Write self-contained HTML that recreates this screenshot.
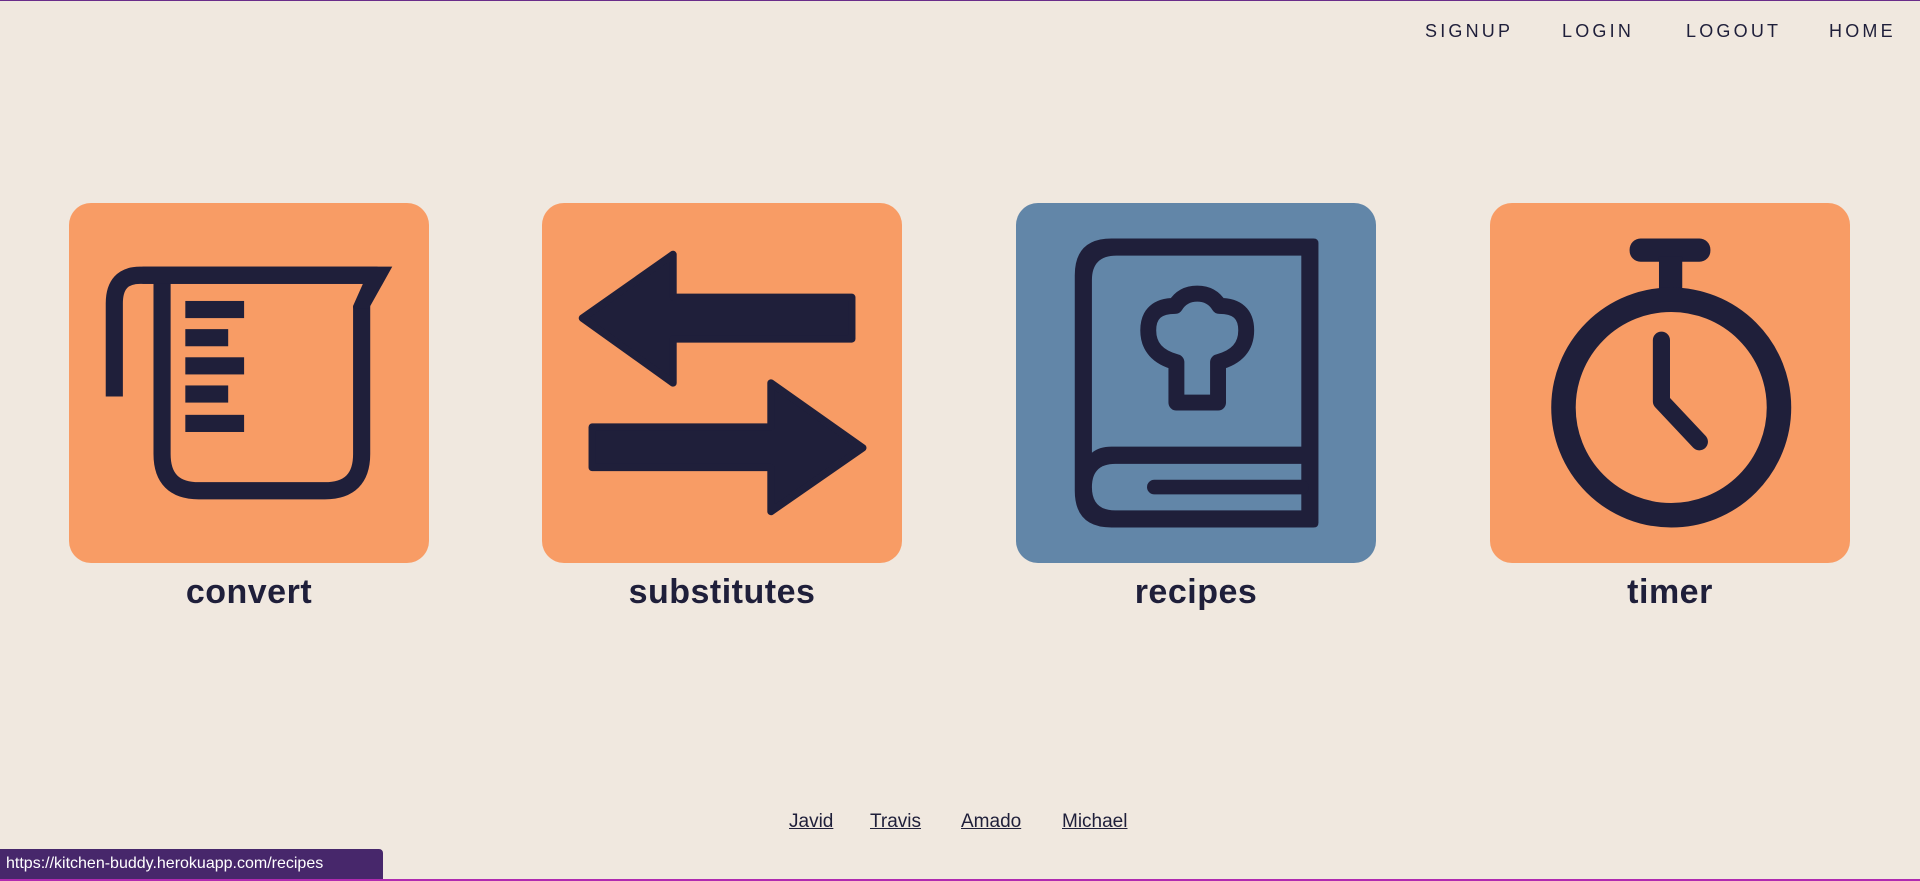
<!DOCTYPE html>
<html><head><meta charset="utf-8"><style>
html,body{margin:0;padding:0}
body{width:1920px;height:881px;background:#f0e8df;position:relative;overflow:hidden;font-family:"Liberation Sans",sans-serif;color:#1f1f3a}
.topline{position:absolute;left:0;top:0;width:1920px;height:1px;background:#6a2d8a}
.botline{position:absolute;left:0;bottom:0;width:1920px;height:2px;background:#b02ab0}
.nav a{position:absolute;top:21px;font-size:18px;letter-spacing:3.2px;color:#1f1f3a;text-decoration:none}
.card{position:absolute;top:203px;width:360px;height:360px;border-radius:22px;background:#f89c65}
.card svg{width:360px;height:360px;display:block}
.lbl{position:absolute;top:573px;width:360px;text-align:center;font-size:34px;font-weight:bold;letter-spacing:0.5px}
.foot a{position:absolute;top:811px;font-size:19px;color:#1f1f3a;text-decoration:underline}
.status{position:absolute;left:0;top:849px;width:383px;height:30px;background:#47276b;border-top-right-radius:4px;color:#fff;font-size:16px;line-height:30px;padding-left:6px;box-sizing:border-box}
</style></head><body>
<div class="topline"></div>
<div class="nav">
<a style="left:1425px">SIGNUP</a>
<a style="left:1562px">LOGIN</a>
<a style="left:1686px">LOGOUT</a>
<a style="left:1829px">HOME</a>
</div>

<div class="card" style="left:69px">
<svg viewBox="0 0 294 294">
<g fill="none" stroke="#1f1f3a" stroke-width="14">
<path d="M37 158 V82 Q37 59 58 59 H252"/>
<path d="M76 59 V205 Q76 235 106 235 H209 Q239 235 239 205 V84"/>
</g>
<polygon fill="#1f1f3a" points="60,52 264,52 245,86 232,86 232,84 240,66 60,66"/>
<g fill="#1f1f3a">
<rect x="95" y="80" width="48" height="14"/>
<rect x="95" y="103" width="35" height="14"/>
<rect x="95" y="126" width="48" height="14"/>
<rect x="95" y="149" width="35" height="14"/>
<rect x="95" y="173" width="48" height="14"/>
</g>
</svg></div>
<div class="lbl" style="left:69px">convert</div>

<div class="card" style="left:542px">
<svg viewBox="0 0 294 294">
<g fill="#1f1f3a" stroke="#1f1f3a" stroke-width="6" stroke-linejoin="round">
<path d="M33 94 L107 42 V77 H253 V111 H107 V147 Z"/>
<path d="M262 200 L187 147 V183 H41 V216 H187 V252 Z"/>
</g>
</svg></div>
<div class="lbl" style="left:542px">substitutes</div>

<div class="card" style="left:1016px;background:#6286a8">
<svg viewBox="0 0 294 294">
<path fill="#1f1f3a" d="M78 29 H243 Q247 29 247 33 V261 Q247 265 243 265 H78 Q48 265 48 235 V59 Q48 29 78 29 Z"/>
<path fill="#6286a8" d="M82 43 H233 V199 H78 Q68 199 62 204 V63 Q62 43 82 43 Z"/>
<path fill="#6286a8" d="M81 213 H233 V251 H81 Q62 251 62 232 Q62 213 81 213 Z"/>
<line x1="113" y1="232" x2="233" y2="232" stroke="#1f1f3a" stroke-width="12" stroke-linecap="round"/>
<path fill="none" stroke="#1f1f3a" stroke-width="13" stroke-linejoin="round" d="M131 163 V130 Q108 124 108 104 Q108 84 130 84 Q136 74 148 74 Q160 74 166 84 Q188 84 188 104 Q188 124 165 130 V163 Z"/>
</svg></div>
<div class="lbl" style="left:1016px">recipes</div>

<div class="card" style="left:1490px">
<svg viewBox="0 0 294 294">
<rect x="114" y="29" width="66" height="19" rx="9" fill="#1f1f3a"/>
<rect x="138" y="44" width="19" height="30" fill="#1f1f3a"/>
<circle cx="148" cy="167" r="88" fill="none" stroke="#1f1f3a" stroke-width="20"/>
<path d="M140 112 V162 L171 195" fill="none" stroke="#1f1f3a" stroke-width="14" stroke-linecap="round" stroke-linejoin="round"/>
</svg></div>
<div class="lbl" style="left:1490px">timer</div>

<div class="foot">
<a style="left:789px">Javid</a>
<a style="left:870px">Travis</a>
<a style="left:961px">Amado</a>
<a style="left:1062px">Michael</a>
</div>
<div class="status">https://kitchen-buddy.herokuapp.com/recipes</div>
<div class="botline"></div>
</body></html>
